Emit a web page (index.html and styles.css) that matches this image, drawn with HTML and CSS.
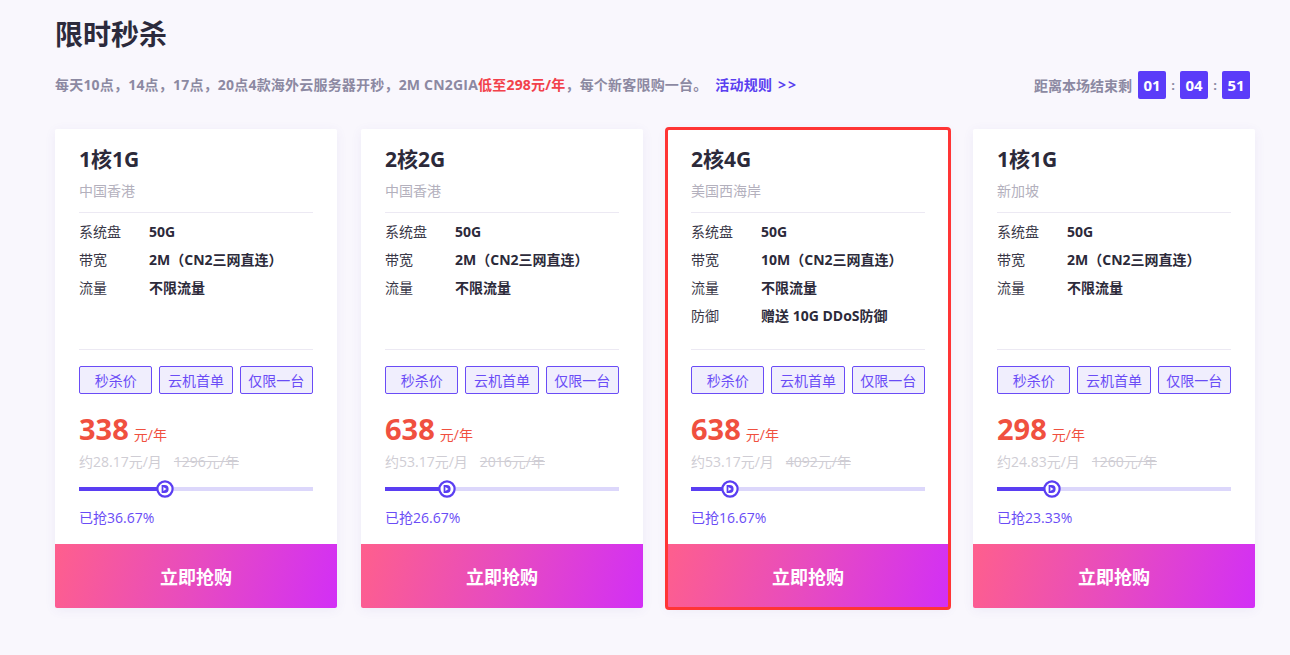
FILE: index.html
```html
<!DOCTYPE html>
<html lang="zh-CN">
<head>
<meta charset="utf-8">
<title>限时秒杀</title>
<link rel="stylesheet" href="styles.css">
</head>
<body>
<div class="wrap">
  <h1 class="title">限时秒杀</h1>
  <div class="intro">
    <p class="desc">每天10点，14点，17点，20点4款海外云服务器开秒，2M CN2GIA<span class="hot">低至298元/年</span>，每个新客限购一台。 <a class="rule" href="#">活动规则 <span class="arrows">&gt;&gt;</span></a></p>
    <div class="countdown">
      <span class="cd-label">距离本场结束剩</span>
      <span class="cd-box">01</span><span class="cd-sep">:</span><span class="cd-box">04</span><span class="cd-sep">:</span><span class="cd-box">51</span>
    </div>
  </div>

  <div class="cards">
    <div class="card">
      <div class="card-body">
        <div class="name">1核1G</div>
        <div class="loc">中国香港</div>
        <div class="specs">
          <div class="row"><span class="k">系统盘</span><span class="v">50G</span></div>
          <div class="row"><span class="k">带宽</span><span class="v">2M（CN2三网直连）</span></div>
          <div class="row"><span class="k">流量</span><span class="v">不限流量</span></div>
        </div>
        <div class="tags"><span class="tag">秒杀价</span><span class="tag">云机首单</span><span class="tag">仅限一台</span></div>
        <div class="price"><span class="num">338</span><span class="unit">元/年</span></div>
        <div class="sub"><span>约28.17元/月</span><span class="old">1296元/年</span></div>
        <div class="slider"><div class="track"><div class="fill" style="width:36.67%"></div></div><span class="thumb" style="left:36.67%"><svg viewBox="0 0 18 18" width="18" height="18"><circle cx="9" cy="9" r="7.6" fill="#fff" stroke="#5a3ef2" stroke-width="2.2"/><path d="M5.6 5 h3 a4 4 0 0 1 0 8 h-3 z" fill="#5a3ef2"/><path d="M7.4 6.9 l3.1 2.1 l-3.1 2.1 z" fill="#fff"/></svg></span></div>
        <div class="sold">已抢36.67%</div>
      </div>
      <a class="buy" href="#">立即抢购</a>
    </div>

    <div class="card">
      <div class="card-body">
        <div class="name">2核2G</div>
        <div class="loc">中国香港</div>
        <div class="specs">
          <div class="row"><span class="k">系统盘</span><span class="v">50G</span></div>
          <div class="row"><span class="k">带宽</span><span class="v">2M（CN2三网直连）</span></div>
          <div class="row"><span class="k">流量</span><span class="v">不限流量</span></div>
        </div>
        <div class="tags"><span class="tag">秒杀价</span><span class="tag">云机首单</span><span class="tag">仅限一台</span></div>
        <div class="price"><span class="num">638</span><span class="unit">元/年</span></div>
        <div class="sub"><span>约53.17元/月</span><span class="old">2016元/年</span></div>
        <div class="slider"><div class="track"><div class="fill" style="width:26.67%"></div></div><span class="thumb" style="left:26.67%"><svg viewBox="0 0 18 18" width="18" height="18"><circle cx="9" cy="9" r="7.6" fill="#fff" stroke="#5a3ef2" stroke-width="2.2"/><path d="M5.6 5 h3 a4 4 0 0 1 0 8 h-3 z" fill="#5a3ef2"/><path d="M7.4 6.9 l3.1 2.1 l-3.1 2.1 z" fill="#fff"/></svg></span></div>
        <div class="sold">已抢26.67%</div>
      </div>
      <a class="buy" href="#">立即抢购</a>
    </div>

    <div class="card active">
      <div class="card-body">
        <div class="name">2核4G</div>
        <div class="loc">美国西海岸</div>
        <div class="specs">
          <div class="row"><span class="k">系统盘</span><span class="v">50G</span></div>
          <div class="row"><span class="k">带宽</span><span class="v">10M（CN2三网直连）</span></div>
          <div class="row"><span class="k">流量</span><span class="v">不限流量</span></div>
          <div class="row"><span class="k">防御</span><span class="v">赠送 10G DDoS防御</span></div>
        </div>
        <div class="tags"><span class="tag">秒杀价</span><span class="tag">云机首单</span><span class="tag">仅限一台</span></div>
        <div class="price"><span class="num">638</span><span class="unit">元/年</span></div>
        <div class="sub"><span>约53.17元/月</span><span class="old">4092元/年</span></div>
        <div class="slider"><div class="track"><div class="fill" style="width:16.67%"></div></div><span class="thumb" style="left:16.67%"><svg viewBox="0 0 18 18" width="18" height="18"><circle cx="9" cy="9" r="7.6" fill="#fff" stroke="#5a3ef2" stroke-width="2.2"/><path d="M5.6 5 h3 a4 4 0 0 1 0 8 h-3 z" fill="#5a3ef2"/><path d="M7.4 6.9 l3.1 2.1 l-3.1 2.1 z" fill="#fff"/></svg></span></div>
        <div class="sold">已抢16.67%</div>
      </div>
      <a class="buy" href="#">立即抢购</a>
    </div>

    <div class="card">
      <div class="card-body">
        <div class="name">1核1G</div>
        <div class="loc">新加坡</div>
        <div class="specs">
          <div class="row"><span class="k">系统盘</span><span class="v">50G</span></div>
          <div class="row"><span class="k">带宽</span><span class="v">2M（CN2三网直连）</span></div>
          <div class="row"><span class="k">流量</span><span class="v">不限流量</span></div>
        </div>
        <div class="tags"><span class="tag">秒杀价</span><span class="tag">云机首单</span><span class="tag">仅限一台</span></div>
        <div class="price"><span class="num">298</span><span class="unit">元/年</span></div>
        <div class="sub"><span>约24.83元/月</span><span class="old">1260元/年</span></div>
        <div class="slider"><div class="track"><div class="fill" style="width:23.33%"></div></div><span class="thumb" style="left:23.33%"><svg viewBox="0 0 18 18" width="18" height="18"><circle cx="9" cy="9" r="7.6" fill="#fff" stroke="#5a3ef2" stroke-width="2.2"/><path d="M5.6 5 h3 a4 4 0 0 1 0 8 h-3 z" fill="#5a3ef2"/><path d="M7.4 6.9 l3.1 2.1 l-3.1 2.1 z" fill="#fff"/></svg></span></div>
        <div class="sold">已抢23.33%</div>
      </div>
      <a class="buy" href="#">立即抢购</a>
    </div>
  </div>
</div>
</body>
</html>
```
FILE: styles.css
```css
* { box-sizing: border-box; }
html, body { margin: 0; padding: 0; }
body {
  background: #f9f7fd;
  font-family: "Open Sans", "Noto Sans CJK SC", sans-serif;
  color: #2c2a3a;
  width: 1290px;
  height: 655px;
  overflow: hidden;
}
.wrap {
  width: 1200px;
  margin-left: 55px;
}
.title {
  margin: 14px 0 0;
  font-size: 28px;
  line-height: 40px;
  font-weight: 700;
  color: #2c2a3c;
}
.intro {
  margin-top: 17px;
  height: 28px;
  display: flex;
  align-items: center;
  justify-content: space-between;
  padding-right: 5px;
}
.desc {
  margin: 0;
  font-size: 14px;
  letter-spacing: 0.2px;
  line-height: 20px;
  font-weight: 700;
  color: #8c89a2;
}
.hot { color: #f2414b; }
.rule {
  color: #5a3ff0;
  text-decoration: none;
  margin-left: 4px;
}
.arrows {
  letter-spacing: 2px;
  margin-left: 2px;
}
.countdown {
  display: flex;
  align-items: center;
}
.cd-label {
  font-size: 14px;
  font-weight: 700;
  color: #8c89a2;
  margin-right: 6px;
}
.cd-box {
  width: 28px;
  height: 28px;
  border-radius: 2px;
  background: #5b3cf9;
  color: #fff;
  font-size: 15px;
  font-weight: 700;
  display: flex;
  align-items: center;
  justify-content: center;
}
.cd-sep {
  width: 14px;
  text-align: center;
  color: #8c89a2;
  font-weight: 700;
  font-size: 13px;
}
.cards {
  margin-top: 30px;
  display: flex;
  gap: 24px;
}
.card {
  width: 282px;
  background: #fff;
  box-shadow: 0 2px 12px rgba(90, 70, 170, 0.07);
  border-radius: 2px;
  display: flex;
  flex-direction: column;
}
.card.active {
  outline: 3px solid #ff3535;
  outline-offset: -1px;
}
.card-body {
  padding: 15px 24px 0;
}
.name {
  font-size: 21px;
  line-height: 30px;
  font-weight: 700;
  color: #2c2a3a;
}
.loc {
  margin-top: 7px;
  font-size: 14px;
  line-height: 20px;
  color: #b3b0bd;
  padding-bottom: 11px;
  border-bottom: 1px solid #ece9f3;
}
.specs {
  height: 137px;
  padding-top: 4px;
  border-bottom: 1px solid #ece9f3;
}
.row {
  height: 28px;
  display: flex;
  align-items: center;
  font-size: 14px;
}
.k {
  width: 70px;
  color: #3a3848;
}
.v {
  font-weight: 700;
  color: #2c2a3a;
}
.tags {
  margin-top: 16px;
  display: flex;
  gap: 7px;
}
.tag {
  flex: 1;
  height: 28px;
  border: 1px solid #6a4cf6;
  background: #f0eefd;
  color: #6a4cf6;
  border-radius: 2px;
  font-size: 14px;
  display: flex;
  align-items: center;
  justify-content: center;
}
.price {
  margin-top: 17px;
  height: 36px;
  display: flex;
  align-items: baseline;
  color: #f0503f;
}
.num {
  font-size: 29px;
  line-height: 36px;
  font-weight: 700;
}
.unit {
  font-size: 14px;
  margin-left: 5px;
}
.sub {
  margin-top: 5px;
  font-size: 14px;
  line-height: 20px;
  color: #cfcdd4;
  display: flex;
  gap: 12px;
}
.old { text-decoration: line-through; }
.slider {
  position: relative;
  margin-top: 8px;
  height: 18px;
  display: flex;
  align-items: center;
}
.track {
  width: 100%;
  height: 4px;
  background: #dcd7fb;
}
.fill {
  height: 100%;
  background: #5a3ef2;
}
.thumb {
  position: absolute;
  top: 0;
  width: 18px;
  height: 18px;
  transform: translateX(-50%);
  display: block;
}
.thumb svg { display: block; }
.sold {
  margin-top: 10px;
  font-size: 14px;
  line-height: 20px;
  color: #6a4cf6;
}
.buy {
  margin-top: 16px;
  height: 64px;
  display: flex;
  align-items: center;
  justify-content: center;
  background: linear-gradient(105deg, #fe5f8d 0%, #e74bc0 50%, #d22ff6 100%);
  color: #fff;
  font-size: 18px;
  font-weight: 700;
  text-decoration: none;
  border-radius: 0 0 2px 2px;
}
```
